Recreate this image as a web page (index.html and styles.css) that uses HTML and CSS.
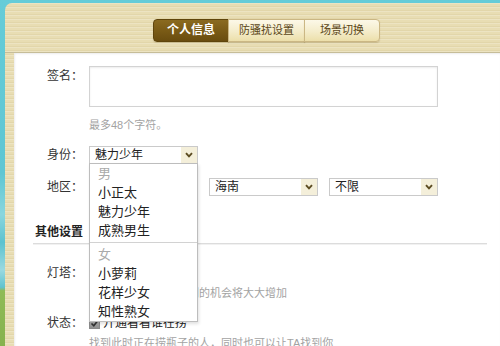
FILE: index.html
```html
<!DOCTYPE html>
<html lang="zh-CN">
<head>
  <meta charset="UTF-8">
  <meta name="viewport" content="width=device-width, initial-scale=1.0">
  <title>个人信息</title>
  <link rel="stylesheet" href="styles.css">
</head>
<body>
  <div id="panel">
    <div id="panelHead">
      <div class="tabs">
        <a class="tab active">个人信息</a>
        <a class="tab">防骚扰设置</a>
        <a class="tab">场景切换</a>
      </div>
    </div>

    <div id="panelBody">
      <div class="row">
        <label class="row-label">签名：</label>
        <div class="row-field">
          <textarea class="sign-input"></textarea>
          <p class="hint hint-sign">最多48个字符。</p>
        </div>
      </div>

      <div class="row row-identity">
        <label class="row-label label-select">身份：</label>
        <div class="row-field">
          <div class="select">
            <span class="select-text">魅力少年</span>
            <span class="select-arrow"><svg width="8" height="6" viewBox="0 0 8 6"><path d="M1 1.2 L4 4.4 L7 1.2" fill="none" stroke="#5c4c22" stroke-width="1.9"/></svg></span>
            <ul class="options">
              <li class="group">男</li>
              <li>小正太</li>
              <li>魅力少年</li>
              <li>成熟男生</li>
              <li class="divider"></li>
              <li class="group">女</li>
              <li>小萝莉</li>
              <li>花样少女</li>
              <li>知性熟女</li>
            </ul>
          </div>
        </div>
      </div>

      <div class="row row-region">
        <label class="row-label label-select">地区：</label>
        <div class="row-field selects">
          <div class="select">
            <span class="select-text">中国</span>
            <span class="select-arrow"><svg width="8" height="6" viewBox="0 0 8 6"><path d="M1 1.2 L4 4.4 L7 1.2" fill="none" stroke="#5c4c22" stroke-width="1.9"/></svg></span>
          </div>
          <div class="select">
            <span class="select-text">海南</span>
            <span class="select-arrow"><svg width="8" height="6" viewBox="0 0 8 6"><path d="M1 1.2 L4 4.4 L7 1.2" fill="none" stroke="#5c4c22" stroke-width="1.9"/></svg></span>
          </div>
          <div class="select">
            <span class="select-text">不限</span>
            <span class="select-arrow"><svg width="8" height="6" viewBox="0 0 8 6"><path d="M1 1.2 L4 4.4 L7 1.2" fill="none" stroke="#5c4c22" stroke-width="1.9"/></svg></span>
          </div>
        </div>
      </div>

      <div class="section-title">其他设置</div>

      <div class="row row-beacon">
        <label class="row-label">灯塔：</label>
        <div class="row-field">
          <div class="check-line"><span class="check"></span>开通灯塔</div>
          <p class="hint">开通后，你被别人捞到的机会将大大增加</p>
        </div>
      </div>

      <div class="row row-status">
        <label class="row-label">状态：</label>
        <div class="row-field">
          <div class="check-line"><span class="check checked"><svg width="9" height="9" viewBox="0 0 9 9"><path d="M1.5 4.5 L3.8 6.8 L7.5 2" fill="none" stroke="#333" stroke-width="1.6"/></svg></span>开通看看谁在捞</div>
          <p class="hint">找到此时正在捞瓶子的人，同时也可以让TA找到你</p>
        </div>
      </div>
    </div>
  </div>
</body>
</html>
```

FILE: styles.css
```css
html, body {
  margin: 0;
  padding: 0;
}

body {
  width: 500px;
  height: 346px;
  overflow: hidden;
  box-sizing: border-box;
  padding-top: 3px;
  font-family: "Liberation Sans", "Noto Sans CJK SC", sans-serif;
  font-size: 12px;
  color: #333;
  background: linear-gradient(180deg, #66ccd8 0%, #5ec6d3 50%, #8ad6de 62%, #5cc2cf 70%, #9ad9e0 78%, #5fc3cf 83%, #8fbb57 84%, #86b24e 100%);
}

#panel {
  margin-left: 5px;
  height: 343px;
  display: flex;
  flex-direction: column;
  border-top-left-radius: 7px;
  background-color: #e8ddb3;
  background-image: repeating-linear-gradient(180deg, rgba(255, 255, 255, 0.2) 0 1px, rgba(255, 255, 255, 0) 1px 3px, rgba(150, 120, 50, 0.07) 3px 4px);
}

#panelHead {
  flex: none;
  height: 50px;
  box-sizing: border-box;
  padding: 16px 0 0 148px;
  border-bottom: 1px solid #c6bd99;
}

.tabs {
  display: flex;
}

.tab {
  width: 77px;
  height: 23px;
  box-sizing: border-box;
  margin-left: -1px;
  line-height: 21px;
  text-align: center;
  font-size: 11px;
  color: #5b4718;
  border: 1px solid #cbb784;
  background: linear-gradient(180deg, #fcf8e8 0%, #f4ecca 55%, #ecdfaa 100%);
  box-shadow: 0 1px 1px rgba(120, 100, 50, 0.25);
}

.tab:first-child {
  width: 76px;
  margin-left: 0;
  border-radius: 4px 0 0 4px;
}

.tab:last-child {
  width: 76px;
  border-radius: 0 4px 4px 0;
}

.tab.active {
  color: #fff;
  font-size: 12px;
  font-weight: bold;
  border-color: #5f450c;
  background: linear-gradient(180deg, #8a6a20 0%, #7a5b16 50%, #6a4d0f 100%);
}

#panelBody {
  flex: 1;
  min-height: 0;
  overflow: hidden;
  margin-left: 9px;
  padding-top: 13px;
  background: #fff;
  box-shadow: inset 1px 1px 2px rgba(0, 0, 0, 0.08);
}

.row {
  display: flex;
  align-items: flex-start;
}

.row-label {
  flex: none;
  width: 69px;
  text-align: right;
  line-height: 20px;
  color: #333;
}

.label-select {
  line-height: 18px;
}

.row-field {
  margin-left: 6px;
}

.sign-input {
  display: block;
  width: 349px;
  height: 41px;
  box-sizing: border-box;
  margin: 0;
  padding: 0;
  resize: none;
  border: 1px solid #d3d3d3;
  box-shadow: inset 0 1px 2px rgba(0, 0, 0, 0.08);
}

.hint {
  margin: 2px 0 0;
  font-size: 11px;
  line-height: 16px;
  color: #a3a3a3;
  white-space: nowrap;
}

.hint-sign {
  margin-top: 10px;
}

.row-identity {
  margin-top: 13px;
}

.row-region {
  margin-top: 14px;
}

.selects {
  display: flex;
  gap: 11px;
}

.select {
  position: relative;
  display: flex;
  width: 109px;
  height: 18px;
  box-sizing: border-box;
  border: 1px solid #cacaca;
  background: #fff;
}

.select-text {
  flex: 1;
  padding-left: 5px;
  line-height: 16px;
  font-size: 12px;
  color: #222;
}

.select-arrow {
  width: 16px;
  display: flex;
  align-items: center;
  justify-content: center;
  background: #f4efda;
}

.options {
  position: absolute;
  left: -1px;
  top: 16px;
  z-index: 5;
  width: 109px;
  box-sizing: border-box;
  margin: 0;
  padding: 0;
  list-style: none;
  background: #fff;
  border: 1px solid #bdbdbd;
  box-shadow: 1px 2px 3px rgba(0, 0, 0, 0.12);
}

.options li {
  height: 19px;
  line-height: 19px;
  padding-left: 8px;
  font-size: 13px;
  color: #222;
}

.options .group {
  color: #aaa;
}

.options .divider {
  height: 5px;
  position: relative;
}

.options .divider::after {
  content: "";
  position: absolute;
  left: 0;
  right: 0;
  top: 2px;
  border-top: 1px solid #d2d2d2;
}

.section-title {
  width: 452px;
  margin: 26px 0 0 19px;
  padding-left: 2px;
  line-height: 21px;
  font-weight: bold;
  color: #222;
  border-bottom: 1px solid #dcdcdc;
  box-shadow: 0 1px 0 #f1f1f1;
}

.row-beacon {
  margin-top: 19px;
}

.row-status {
  margin-top: 12px;
}

.check-line {
  display: flex;
  align-items: center;
  gap: 3px;
  line-height: 20px;
  color: #222;
}

.check {
  width: 11px;
  height: 11px;
  box-sizing: border-box;
  display: flex;
  align-items: center;
  justify-content: center;
  border: 1px solid #8a8a8a;
  background: linear-gradient(180deg, #f2f2f2, #cfcfcf);
}

.check.checked {
  background: linear-gradient(180deg, #bdbdbd, #8f8f8f);
}
```
